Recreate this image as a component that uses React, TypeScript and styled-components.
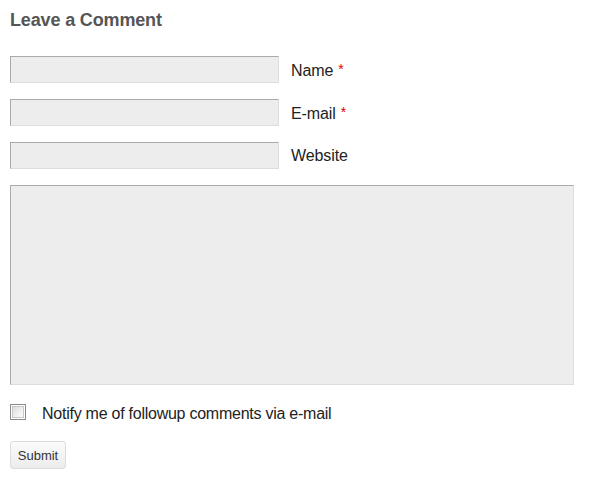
import React from "react";
import styled, { createGlobalStyle } from "styled-components";

const Global = createGlobalStyle`
  html, body { margin: 0; padding: 0; background: #fff; }
  body { font-family: "Liberation Sans", Arial, sans-serif; }
`;

const Form = styled.form`
  display: flex;
  flex-direction: column;
  padding: 10px 0 0 10px;
  width: 565px;
`;

const Heading = styled.h3`
  margin: 0 0 25px 0;
  font-size: 18px;
  font-weight: bold;
  color: #555;
  line-height: 21px;
  letter-spacing: -0.15px;
`;

const Row = styled.div`
  display: flex;
  align-items: center;
  gap: 12px;
  margin-bottom: 16px;
`;

const TextInput = styled.input`
  box-sizing: border-box;
  width: 269px;
  height: 27px;
  margin: 0;
  padding: 3px 4px;
  background: #ededed;
  border: 1px solid;
  border-color: #aaa #ddd #ddd #aaa;
  font: 14px "Liberation Sans", Arial, sans-serif;
  outline: none;
`;

const Label = styled.label`
  font-size: 16px;
  color: #222;
  line-height: 18px;
  letter-spacing: -0.1px;
`;

const Req = styled.span`
  color: #d00;
  font-size: 14px;
  vertical-align: 2px;
  margin-left: 5px;
`;

const TextArea = styled.textarea`
  box-sizing: border-box;
  display: block;
  width: 564px;
  height: 200px;
  margin: 0 0 19px 0;
  padding: 4px;
  resize: none;
  background: #ededed;
  border: 1px solid;
  border-color: #aaa #ddd #ddd #aaa;
  outline: none;
`;

const CheckRow = styled.div`
  display: flex;
  align-items: center;
  gap: 16px;
  margin-bottom: 17px;
`;

const Check = styled.span`
  box-sizing: border-box;
  width: 16px;
  height: 16px;
  margin-bottom: 4px;
  border: 1px solid #8a8a8a;
  padding: 1px;
  background: #fff;
  display: flex;
  &::after {
    content: "";
    flex: 1;
    background: linear-gradient(135deg, #dcdcdc 0%, #f4f4f4 70%, #fbfbfb 100%);
    border: 1px solid #c8c8c8;
  }
`;

const CheckText = styled.span`
  font-size: 16px;
  color: #222;
  line-height: 18px;
  letter-spacing: -0.25px;
`;

const Submit = styled.button`
  align-self: flex-start;
  box-sizing: border-box;
  width: 56px;
  height: 28px;
  padding: 0;
  border: 1px solid #dcdcdc;
  border-radius: 3px;
  background: linear-gradient(#fbfbfb, #ececec);
  color: #333;
  font: 13px "Liberation Sans", Arial, sans-serif;
`;

export default function App() {
  return (
    <>
      <Global />
      <Form onSubmit={(e) => e.preventDefault()}>
        <Heading>Leave a Comment</Heading>
        <Row>
          <TextInput type="text" />
          <Label>
            Name<Req>*</Req>
          </Label>
        </Row>
        <Row>
          <TextInput type="text" />
          <Label>
            E-mail<Req>*</Req>
          </Label>
        </Row>
        <Row>
          <TextInput type="text" />
          <Label>Website</Label>
        </Row>
        <TextArea />
        <CheckRow>
          <Check />
          <CheckText>Notify me of followup comments via e-mail</CheckText>
        </CheckRow>
        <Submit type="submit">Submit</Submit>
      </Form>
    </>
  );
}
